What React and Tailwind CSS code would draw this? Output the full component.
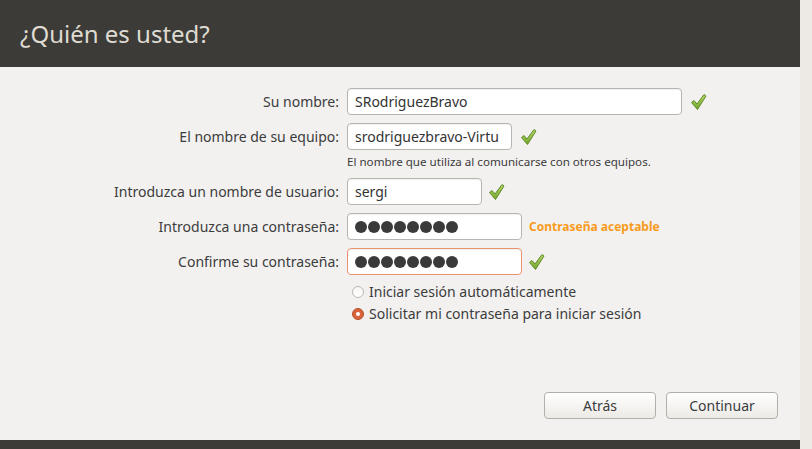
import React from 'react';

const Check = () => (
  <svg width="17" height="18" viewBox="0 0 17 18" className="shrink-0">
    <defs>
      <linearGradient id="chk" x1="0" y1="0" x2="0" y2="1">
        <stop offset="0" stopColor="#b4d86a" />
        <stop offset="1" stopColor="#73a52c" />
      </linearGradient>
    </defs>
    <path
      d="M1.5 9.5 L4 7.5 L7 11 L14 1.5 L16 3 L7.5 16.5 Z"
      fill="url(#chk)"
      stroke="#5f8a25"
      strokeWidth="1"
      strokeLinejoin="round"
    />
  </svg>
);

const Dots = () => (
  <div className="flex gap-[1px]">
    {[0, 1, 2, 3, 4, 5, 6, 7].map((i) => (
      <span key={i} className="w-[12px] h-[12px] rounded-full bg-[#3a3a3a]" />
    ))}
  </div>
);

const Field = ({ label, value, width, dots, warn, after, top }) => (
  <div className={`flex items-center ${top}`}>
    <div className="w-[340px] pr-[1px] text-right text-[14px] text-[#3c3c3c]">{label}</div>
    <div
      className={`ml-[7px] h-[27px] ${width} rounded-[4px] border bg-white px-[7px] flex items-center overflow-hidden whitespace-nowrap text-[14px] text-[#333] shadow-[inset_0_1px_1px_rgba(0,0,0,0.06)] ${
        warn ? 'border-[#e9936e]' : 'border-[#b8b5b0]'
      }`}
    >
      {dots ? <Dots /> : value}
    </div>
    {after}
  </div>
);

const Radio = ({ checked, label }) => (
  <div className="flex items-center leading-[16px]">
    {checked ? (
      <span className="w-[12px] h-[12px] rounded-full bg-[#d9623a] border border-[#b5502c] flex items-center justify-center">
        <span className="w-[4px] h-[4px] rounded-full bg-white" />
      </span>
    ) : (
      <span className="w-[12px] h-[12px] rounded-full border border-[#bdb9b3] bg-gradient-to-b from-[#f6f5f3] to-white" />
    )}
    <span className="ml-[5px] text-[14px] text-[#3c3c3c]">{label}</span>
  </div>
);

const Button = ({ children }) => (
  <button className="h-[27px] w-[112px] rounded-[4px] border border-[#b3afa8] bg-gradient-to-b from-white to-[#eceae6] text-[14px] text-[#3c3c3c]">
    {children}
  </button>
);

export default function App() {
  return (
    <div className="flex h-screen w-[812px] font-['Noto_Sans',sans-serif]">
      <div className="flex flex-col w-[800px]">
        <div className="h-[67px] bg-[#3c3b37] flex items-center px-[20px]">
          <h1 className="text-[24px] text-[#dfdbd2] font-normal">¿Quién es usted?</h1>
        </div>
        <div className="flex-1 bg-[#f2f1f0] flex flex-col">
          <Field top="mt-[21px]" label="Su nombre:" value="SRodriguezBravo" width="w-[335px]" after={<span className="ml-[8px]"><Check /></span>} />
          <Field top="mt-[8px]" label="El nombre de su equipo:" value="srodriguezbravo-Virtu" width="w-[165px]" after={<span className="ml-[8px]"><Check /></span>} />
          <div className="ml-[347px] mt-[3px] text-[11.6px] text-[#3c3c3c]">El nombre que utiliza al comunicarse con otros equipos.</div>
          <Field top="mt-[8px]" label="Introduzca un nombre de usuario:" value="sergi" width="w-[135px]" after={<span className="ml-[6px]"><Check /></span>} />
          <Field
            top="mt-[8px]"
            label="Introduzca una contraseña:"
            dots
            width="w-[175px]"
            after={<span className="ml-[7px] text-[12px] font-bold text-[#f89b1c]">Contraseña aceptable</span>}
          />
          <Field top="mt-[8px]" label="Confirme su contraseña:" dots warn width="w-[175px]" after={<span className="ml-[6px]"><Check /></span>} />
          <div className="ml-[352px] mt-[9px] flex flex-col gap-[6px]">
            <Radio label="Iniciar sesión automáticamente" />
            <Radio checked label="Solicitar mi contraseña para iniciar sesión" />
          </div>
          <div className="flex-1" />
          <div className="flex justify-end gap-[10px] pr-[22px] pb-[21px]">
            <Button>Atrás</Button>
            <Button>Continuar</Button>
          </div>
        </div>
        <div className="h-[9px] bg-[#3c3b37]" />
      </div>
      <div className="w-[12px] bg-[#edeae5]" />
    </div>
  );
}
